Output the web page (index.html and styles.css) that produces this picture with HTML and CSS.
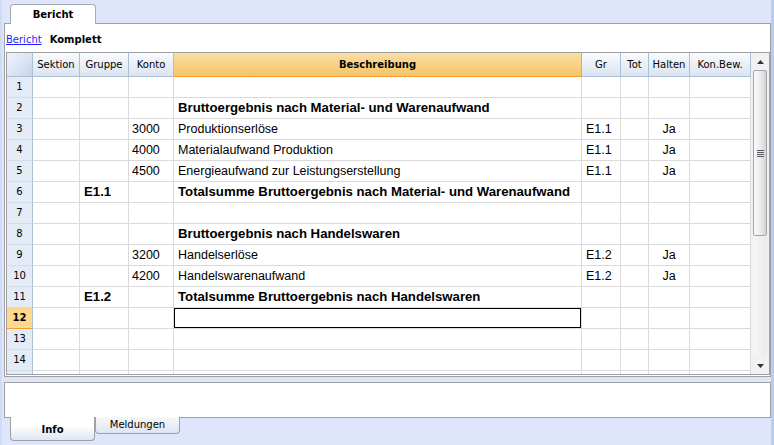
FILE: index.html
```html
<!DOCTYPE html>
<html lang="de">
<head>
    <meta charset="UTF-8">
    <title>Bericht - Komplett</title>
    <link rel="stylesheet" href="styles.css">
</head>
<body>
    <div class="top-tabs">
        <div class="tab">Bericht</div>
    </div>

    <div class="panel">
        <div class="crumbs">
            <a href="#">Bericht</a>
            <span class="crumb-current">Komplett</span>
        </div>

        <div class="grid">
            <div class="sheet">
                <div class="row head">
                    <div class="corner"></div>
                    <div class="hc">Sektion</div>
                    <div class="hc">Gruppe</div>
                    <div class="hc">Konto</div>
                    <div class="hc hc-active">Beschreibung</div>
                    <div class="hc">Gr</div>
                    <div class="hc">Tot</div>
                    <div class="hc">Halten</div>
                    <div class="hc">Kon.Bew.</div>
                </div>

                <div class="row"><div class="rn">1</div><div class="c"></div><div class="c"></div><div class="c"></div><div class="c"></div><div class="c"></div><div class="c"></div><div class="c"></div><div class="c"></div></div>
                <div class="row"><div class="rn">2</div><div class="c"></div><div class="c"></div><div class="c"></div><div class="c b">Bruttoergebnis nach Material- und Warenaufwand</div><div class="c"></div><div class="c"></div><div class="c"></div><div class="c"></div></div>
                <div class="row"><div class="rn">3</div><div class="c"></div><div class="c"></div><div class="c">3000</div><div class="c">Produktionserlöse</div><div class="c">E1.1</div><div class="c"></div><div class="c mid">Ja</div><div class="c"></div></div>
                <div class="row"><div class="rn">4</div><div class="c"></div><div class="c"></div><div class="c">4000</div><div class="c">Materialaufwand Produktion</div><div class="c">E1.1</div><div class="c"></div><div class="c mid">Ja</div><div class="c"></div></div>
                <div class="row"><div class="rn">5</div><div class="c"></div><div class="c"></div><div class="c">4500</div><div class="c">Energieaufwand zur Leistungserstellung</div><div class="c">E1.1</div><div class="c"></div><div class="c mid">Ja</div><div class="c"></div></div>
                <div class="row"><div class="rn">6</div><div class="c"></div><div class="c b">E1.1</div><div class="c"></div><div class="c b">Totalsumme Bruttoergebnis nach Material- und Warenaufwand</div><div class="c"></div><div class="c"></div><div class="c"></div><div class="c"></div></div>
                <div class="row"><div class="rn">7</div><div class="c"></div><div class="c"></div><div class="c"></div><div class="c"></div><div class="c"></div><div class="c"></div><div class="c"></div><div class="c"></div></div>
                <div class="row"><div class="rn">8</div><div class="c"></div><div class="c"></div><div class="c"></div><div class="c b">Bruttoergebnis nach Handelswaren</div><div class="c"></div><div class="c"></div><div class="c"></div><div class="c"></div></div>
                <div class="row"><div class="rn">9</div><div class="c"></div><div class="c"></div><div class="c">3200</div><div class="c">Handelserlöse</div><div class="c">E1.2</div><div class="c"></div><div class="c mid">Ja</div><div class="c"></div></div>
                <div class="row"><div class="rn">10</div><div class="c"></div><div class="c"></div><div class="c">4200</div><div class="c">Handelswarenaufwand</div><div class="c">E1.2</div><div class="c"></div><div class="c mid">Ja</div><div class="c"></div></div>
                <div class="row"><div class="rn">11</div><div class="c"></div><div class="c b">E1.2</div><div class="c"></div><div class="c b">Totalsumme Bruttoergebnis nach Handelswaren</div><div class="c"></div><div class="c"></div><div class="c"></div><div class="c"></div></div>
                <div class="row"><div class="rn rn-active">12</div><div class="c"></div><div class="c"></div><div class="c"></div><div class="c selected"></div><div class="c"></div><div class="c"></div><div class="c"></div><div class="c"></div></div>
                <div class="row"><div class="rn">13</div><div class="c"></div><div class="c"></div><div class="c"></div><div class="c"></div><div class="c"></div><div class="c"></div><div class="c"></div><div class="c"></div></div>
                <div class="row"><div class="rn">14</div><div class="c"></div><div class="c"></div><div class="c"></div><div class="c"></div><div class="c"></div><div class="c"></div><div class="c"></div><div class="c"></div></div>
                <div class="row"><div class="rn"></div><div class="c"></div><div class="c"></div><div class="c"></div><div class="c"></div><div class="c"></div><div class="c"></div><div class="c"></div><div class="c"></div></div>
            </div>

            <div class="scrollbar">
                <div class="sb-btn">
                    <svg width="7" height="4" viewBox="0 0 7 4"><path d="M3.5 0 L7 4 L0 4 Z" fill="#333"/></svg>
                </div>
                <div class="sb-thumb">
                    <div class="grip"></div>
                </div>
                <div class="sb-track"></div>
                <div class="sb-btn">
                    <svg width="7" height="4" viewBox="0 0 7 4"><path d="M0 0 L7 0 L3.5 4 Z" fill="#333"/></svg>
                </div>
            </div>
        </div>
    </div>

    <div class="info-panel"></div>

    <div class="bottom-tabs">
        <div class="btab btab-active">Info</div>
        <div class="btab">Meldungen</div>
    </div>
</body>
</html>
```

FILE: styles.css
```css
body {
    margin: 0;
    width: 774px;
    height: 445px;
    overflow: hidden;
    font-family: "DejaVu Sans", Tahoma, sans-serif;
    font-size: 10px;
    color: #000;
    background: linear-gradient(to right, #cfdcf6 0, #cfdcf6 2px, #dfe6fb 2px, #dfe6fb 771px, #b9cdf2 771px);
}

/* top tab strip */
.top-tabs {
    height: 23px;
    display: flex;
    align-items: flex-end;
    padding-left: 10px;
}
.tab {
    position: relative;
    z-index: 1;
    width: 84px;
    height: 19px;
    margin-bottom: -1px;
    border: 1px solid #a3a9b5;
    border-bottom: none;
    border-radius: 4px 4px 0 0;
    background: #fff;
    font-weight: bold;
    line-height: 19px;
    text-align: center;
}

.panel {
    box-sizing: border-box;
    margin-left: 4px;
    width: 767px;
    height: 354px;
    border: 1px solid #a0a0a0;
    background: #fff;
}

.crumbs {
    height: 28px;
    box-sizing: border-box;
    padding: 9px 0 0 1px;
    display: flex;
    gap: 8px;
    line-height: 14px;
}
.crumbs a {
    color: #1f1fff;
    text-decoration: underline;
}
.crumb-current {
    font-weight: bold;
}

/* grid */
.grid {
    box-sizing: border-box;
    margin-left: 1px;
    width: 764px;
    height: 323px;
    border: 1px solid #a0a0a0;
    display: flex;
}
.sheet {
    width: 744px;
    height: 321px;
    overflow: hidden;
}
.row {
    display: grid;
    grid-template-columns: 26px 47px 49px 45px 408px 39px 28px 41px 61px;
    height: 21px;
}
.row > div {
    box-sizing: border-box;
    border-right: 1px solid #dadada;
    border-bottom: 1px solid #dadada;
    white-space: nowrap;
    overflow: hidden;
}
.row.head {
    height: 24px;
}
.row.head > div {
    border-right-color: #a9c0da;
    border-bottom-color: #a9c0da;
    background: linear-gradient(#f9fbfd, #dce4ef);
    line-height: 23px;
    text-align: center;
}
.row.head > .corner {
    background: linear-gradient(135deg, #eef3fb 0%, #dde6f5 50%, #c3d2ec 100%);
}
.row.head > .hc-active {
    background: linear-gradient(#fadea3, #f5c567);
    border-right-color: #f4a44a;
    border-bottom-color: #f39a33;
    font-weight: bold;
}

.rn {
    background: #e3ebf6;
    border-right-color: #a9c0da !important;
    border-bottom-color: #d3dcea !important;
    text-align: center;
    line-height: 20px;
}
.rn-active {
    background: #ffd88e;
    border-bottom-color: #f4a13c !important;
    font-weight: bold;
}

.c {
    font-family: "Liberation Sans", Arial, sans-serif;
    font-size: 12.5px;
    line-height: 20px;
    padding-left: 3px;
}
.row > .c:nth-child(3),
.row > .c:nth-child(5),
.row > .c:nth-child(6) {
    padding-left: 4px;
}
.c.b {
    font-weight: bold;
    font-size: 13.2px;
}
.c.mid {
    text-align: center;
    padding-left: 0;
}
.c.selected {
    box-shadow: inset 0 0 0 1px #000;
}

/* scrollbar */
.scrollbar {
    width: 18px;
    display: flex;
    flex-direction: column;
    background: #f1f1f3;
}
.sb-btn {
    height: 17px;
    display: flex;
    align-items: center;
    justify-content: center;
}
.sb-thumb {
    height: 166px;
    margin: 0 2px 0 2px;
    box-sizing: border-box;
    border: 1px solid #a6a6a8;
    border-radius: 2px;
    background: linear-gradient(to right, #fbfbfb, #e9e9ec 60%, #d2d2d6);
    display: flex;
    align-items: center;
    justify-content: center;
}
.grip {
    width: 7px;
    height: 7px;
    background: repeating-linear-gradient(#55575c 0, #55575c 1px, #e8e8ea 1px, #e8e8ea 2px);
}
.sb-track {
    flex: 1;
    margin: 0 2px;
    background: linear-gradient(to right, #f6f6f7, #ebebed);
}

/* lower info area */
.info-panel {
    box-sizing: border-box;
    margin: 5px 0 0 4px;
    width: 767px;
    height: 36px;
    border: 1px solid #a0a0a0;
    background: #fff;
}
.bottom-tabs {
    display: flex;
    align-items: flex-start;
    padding-left: 10px;
    margin-top: -1px;
}
.btab {
    box-sizing: border-box;
    width: 85px;
    height: 17px;
    border: 1px solid #a0a0a0;
    border-top: none;
    border-radius: 0 0 4px 4px;
    background: linear-gradient(#f7f8fb, #dfe5f2);
    text-align: center;
    line-height: 16px;
}
.btab-active {
    position: relative;
    z-index: 1;
    height: 24px;
    background: linear-gradient(#fff 40%, #dde5f8);
    font-weight: bold;
    line-height: 26px;
}
```
